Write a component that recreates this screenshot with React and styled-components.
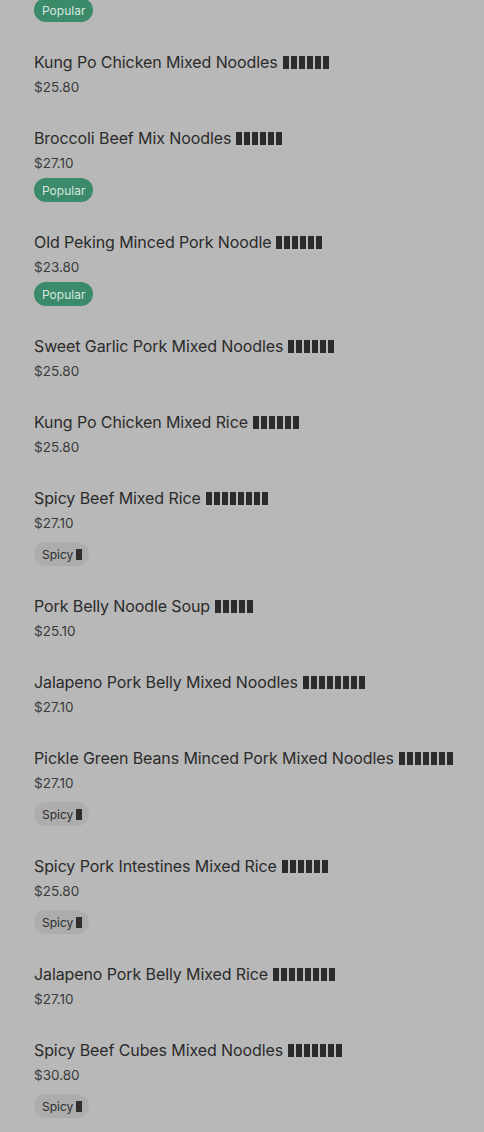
import React from 'react';
import styled, { createGlobalStyle } from 'styled-components';

const GlobalStyle = createGlobalStyle`
  html, body {
    margin: 0;
    padding: 0;
    background: #b8b8b8;
    overflow: hidden;
  }
  body {
    font-family: Inter, "Noto Sans", sans-serif;
  }
`;

const Page = styled.div`
  height: 1132px;
  overflow: hidden;
  background: #b8b8b8;
`;

const DishList = styled.div`
  display: flex;
  flex-direction: column;
  margin-top: -68px;
  padding: 0 34px;
`;

const DishItem = styled.div`
  display: flex;
  flex-direction: column;
  align-items: flex-start;
  padding: 14px 0;
`;

const DishName = styled.div`
  font-size: 16px;
  line-height: 24px;
  letter-spacing: -0.1px;
  color: #2b2b2b;
  white-space: nowrap;
`;

// stand-in for glyphs the page font could not render
const Tofu = styled.span`
  display: inline-block;
  width: ${(p) => p.count * 8 - 2}px;
  height: ${(p) => (p.small ? 11 : 13)}px;
  margin-left: ${(p) => (p.small ? 3 : 5)}px;
  vertical-align: -1px;
  background: repeating-linear-gradient(
    to right,
    ${(p) => p.color || '#2b2b2b'} 0 6px,
    transparent 6px 8px
  );
`;

const Price = styled.div`
  margin-top: 2px;
  font-size: 13.5px;
  line-height: 22px;
  color: #3b3b3b;
`;

const Badge = styled.div`
  display: inline-flex;
  align-items: center;
  height: 24px;
  padding: 0 ${(p) => (p.kind === 'spicy' ? '7px 0 8px' : '8px')};
  border-radius: 12px;
  font-size: 12px;
  margin-top: ${(p) => (p.kind === 'spicy' ? '8px' : '4px')};
  background: ${(p) => (p.kind === 'spicy' ? '#adadad' : '#3b8a69')};
  color: ${(p) => (p.kind === 'spicy' ? '#2e2e2e' : '#d8e8e0')};
`;

const dishes = [
  { name: 'Sweet Garlic Pork Mixed Noodles', boxes: 6, price: '$25.80', tag: 'popular' },
  { name: 'Kung Po Chicken Mixed Noodles', boxes: 6, price: '$25.80' },
  { name: 'Broccoli Beef Mix Noodles', boxes: 6, price: '$27.10', tag: 'popular' },
  { name: 'Old Peking Minced Pork Noodle', boxes: 6, price: '$23.80', tag: 'popular' },
  { name: 'Sweet Garlic Pork Mixed Noodles', boxes: 6, price: '$25.80' },
  { name: 'Kung Po Chicken Mixed Rice', boxes: 6, price: '$25.80' },
  { name: 'Spicy Beef Mixed Rice', boxes: 8, price: '$27.10', tag: 'spicy' },
  { name: 'Pork Belly Noodle Soup', boxes: 5, price: '$25.10' },
  { name: 'Jalapeno Pork Belly Mixed Noodles', boxes: 8, price: '$27.10' },
  { name: 'Pickle Green Beans Minced Pork Mixed Noodles', boxes: 7, price: '$27.10', tag: 'spicy' },
  { name: 'Spicy Pork Intestines Mixed Rice', boxes: 6, price: '$25.80', tag: 'spicy' },
  { name: 'Jalapeno Pork Belly Mixed Rice', boxes: 8, price: '$27.10' },
  { name: 'Spicy Beef Cubes Mixed Noodles', boxes: 7, price: '$30.80', tag: 'spicy' },
];

const renderTag = (tag) => {
  if (tag === 'popular') return <Badge kind="popular">Popular</Badge>;
  if (tag === 'spicy') {
    return (
      <Badge kind="spicy">
        Spicy<Tofu count={1} small color="#2e2e2e" />
      </Badge>
    );
  }
  return null;
};

export default function App() {
  return (
    <Page>
      <GlobalStyle />
      <DishList>
        {dishes.map((dish, index) => (
          <DishItem key={index}>
            <DishName>
              {dish.name}
              <Tofu count={dish.boxes} />
            </DishName>
            <Price>{dish.price}</Price>
            {renderTag(dish.tag)}
          </DishItem>
        ))}
      </DishList>
    </Page>
  );
}
